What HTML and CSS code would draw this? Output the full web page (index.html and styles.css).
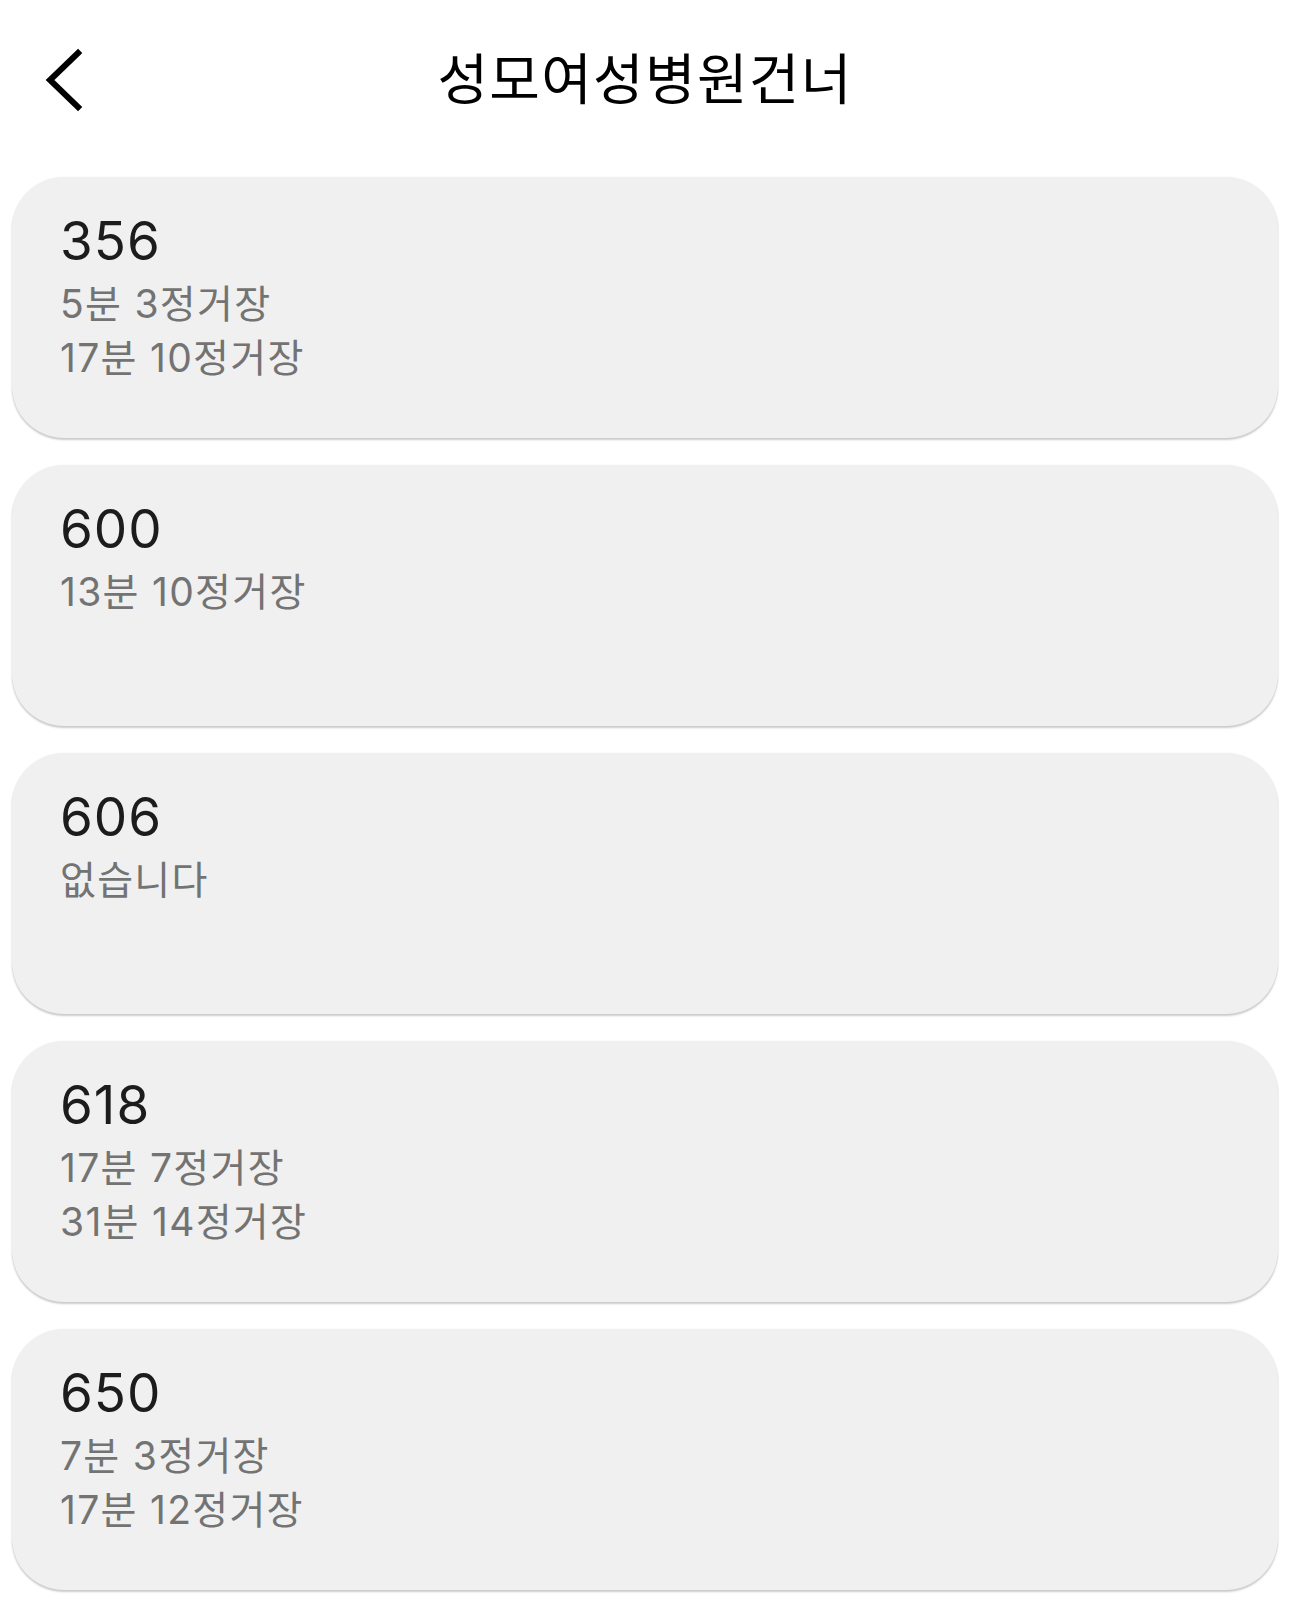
FILE: index.html
```html
<!DOCTYPE html>
<html lang="ko">
<head>
<meta charset="utf-8">
<title>성모여성병원건너</title>
<link rel="stylesheet" href="styles.css">
</head>
<body>
<header class="topbar">
  <button class="back" aria-label="뒤로">
    <svg width="44" height="66" viewBox="0 0 44 66"><path d="M36 7 L8 34 L36 61" fill="none" stroke="#000" stroke-width="6" stroke-linecap="square" stroke-linejoin="miter"/></svg>
  </button>
  <h1 class="title">성모여성병원건너</h1>
  <span class="spacer"></span>
</header>
<main class="list">
  <section class="card">
    <div class="route">356</div>
    <div class="info">5분 3정거장</div>
    <div class="info">17분 10정거장</div>
  </section>
  <section class="card">
    <div class="route">600</div>
    <div class="info">13분 10정거장</div>
  </section>
  <section class="card">
    <div class="route">606</div>
    <div class="info">없습니다</div>
  </section>
  <section class="card">
    <div class="route">618</div>
    <div class="info">17분 7정거장</div>
    <div class="info">31분 14정거장</div>
  </section>
  <section class="card">
    <div class="route">650</div>
    <div class="info">7분 3정거장</div>
    <div class="info">17분 12정거장</div>
  </section>
</main>
</body>
</html>
```
FILE: styles.css
```css
html, body {
  margin: 0;
  padding: 0;
  background: #ffffff;
}
body {
  font-family: Inter, "Noto Sans CJK KR", sans-serif;
  width: 1290px;
  height: 1598px;
  overflow: hidden;
}
.topbar {
  height: 150px;
  display: grid;
  grid-template-columns: 1fr auto 1fr;
  align-items: center;
}
.back {
  justify-self: start;
  margin-left: 42px;
  margin-top: 8px;
  padding: 0;
  border: 0;
  background: none;
  display: flex;
}
.title {
  margin: 0;
  font-family: "Noto Sans CJK KR", sans-serif;
  font-weight: 400;
  font-size: 55px;
  letter-spacing: 1.3px;
  color: #000;
  line-height: 1;
}
.list {
  padding: 27px 12px 0;
  display: flex;
  flex-direction: column;
  gap: 27px;
}
.card {
  box-sizing: border-box;
  height: 261px;
  background: #f0f0f0;
  border-radius: 52px;
  padding: 33px 48px 0;
  box-shadow: 0 2px 2px rgba(0, 0, 0, 0.2), 0 0 2px rgba(0, 0, 0, 0.06);
}
.route {
  font-size: 53px;
  line-height: 62px;
  letter-spacing: 1px;
  color: #1c1c1c;
}
.route + .info {
  margin-top: 5px;
}
.info {
  font-size: 39px;
  line-height: 54px;
  letter-spacing: 1.3px;
  color: #737373;
}
```
